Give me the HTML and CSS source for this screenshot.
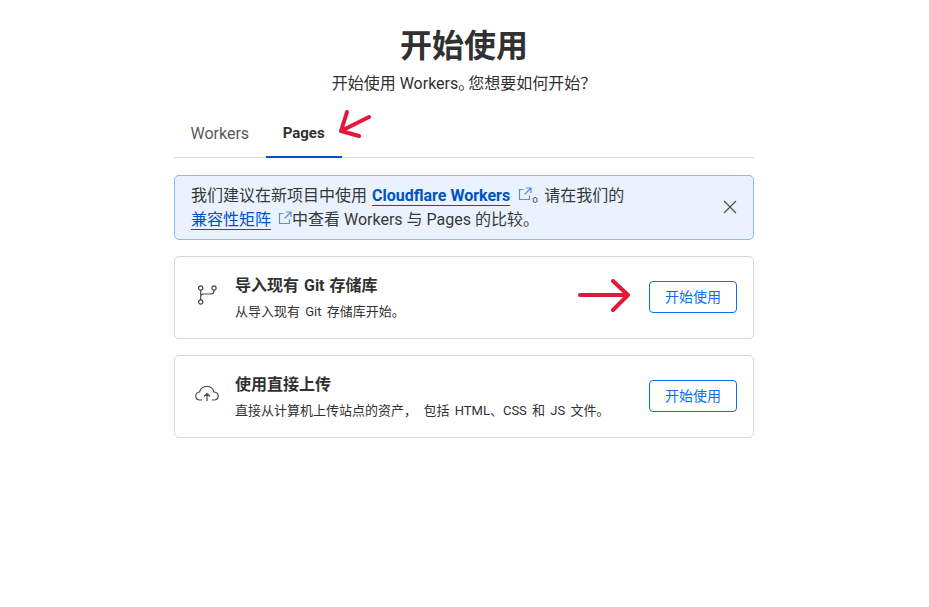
FILE: index.html
```html
<!DOCTYPE html>
<html lang="zh-CN">
<head>
    <meta charset="UTF-8">
    <meta name="viewport" content="width=device-width, initial-scale=1.0">
    <title>开始使用</title>
    <link rel="stylesheet" href="styles.css">
</head>
<body>
    <div class="page">
        <h1 class="title">开始使用</h1>
        <p class="subtitle">开始使用 Workers<span class="tight-stop">。</span>您想要如何开始？</p>

        <!-- Tabs -->
        <div class="tabs">
            <div class="tab">Workers</div>
            <div class="tab tab-active">Pages</div>
        </div>

        <!-- Notice -->
        <div class="notice">
            <p class="notice-text">我们建议在新项目中使用 <a class="link link-strong" href="#">Cloudflare Workers</a>
                <svg class="ext-icon" viewBox="0 0 14 14"><path d="M5.5 2.5H1.5V12.5H11.5V8.5M8 1H13V6M13 1L6.5 7.5"/></svg><span class="tight-stop-small">。</span>请在我们的<br>
                <a class="link" href="#">兼容性矩阵</a>
                <svg class="ext-icon" viewBox="0 0 14 14"><path d="M5.5 2.5H1.5V12.5H11.5V8.5M8 1H13V6M13 1L6.5 7.5"/></svg>中查看 Workers 与 Pages 的比较。</p>
            <svg class="close-icon" viewBox="0 0 14 14"><path d="M1 1L13 13M13 1L1 13"/></svg>
        </div>

        <!-- Options -->
        <div class="card">
            <svg class="card-icon" viewBox="0 0 24 24"><circle cx="5.7" cy="2" r="2.1"/><circle cx="5.7" cy="16" r="2.1"/><circle cx="19" cy="2" r="2.1"/><path d="M5.7 4.1V13.900M19 4.100V5Q19 8 16 8H8Q5.700 8 5.700 10.500"/></svg>
            <div class="card-body">
                <div class="card-title">导入现有 Git 存储库</div>
                <div class="card-desc">从导入现有 Git 存储库开始。</div>
            </div>
            <button class="start-btn">开始使用</button>
        </div>

        <div class="card">
            <svg class="card-icon" viewBox="0 0 24 24"><path d="M7 15H5Q0.800 15 0.800 11Q0.800 7.500 4.500 7Q6 1.500 12 1.500Q17.500 1.500 19 7Q23.200 7.500 23.200 11Q23.200 15 19 15H17M12 16V9M9 11.500L12 8.500L15 11.500"/></svg>
            <div class="card-body">
                <div class="card-title">使用直接上传</div>
                <div class="card-desc">直接从计算机上传站点的资产，　包括 HTML、CSS 和 JS 文件。</div>
            </div>
            <button class="start-btn">开始使用</button>
        </div>
    </div>

    <!-- Hand drawn arrows on top of the screenshot -->
    <svg class="marker marker-pages" viewBox="0 0 34 30"><path d="M31 7L3 21M9 2L3 21L21 26"/></svg>
    <svg class="marker marker-start" viewBox="0 0 56 34"><path d="M2 16H50M35 2L50 16L35 31"/></svg>
</body>
</html>
```

FILE: styles.css
```css
body {
    font-family: Roboto, "Noto Sans CJK SC", sans-serif;
    background-color: #fff;
    color: #313131;
    margin: 0;
    padding-right: 1px;
}
.page {
    width: 580px;
    margin: 0 auto;
    padding-top: 24px;
}
.title {
    font-size: 32px;
    line-height: 44px;
    font-weight: 700;
    text-align: center;
    margin: 0;
}
.subtitle {
    font-size: 16px;
    line-height: 24px;
    text-align: center;
    margin: 4px 0 0;
}
.tight-stop {
    letter-spacing: -6px;
}
.tight-stop-small {
    letter-spacing: -4px;
}
.tabs {
    display: flex;
    height: 47px;
    margin-top: 14px;
    border-bottom: 1px solid #d9d9d9;
}
.tab {
    padding: 0 16.5px;
    font-size: 16px;
    line-height: 47px;
    color: #595959;
}
.tab-active {
    color: #313131;
    font-size: 15px;
    font-weight: 700;
    height: 46px;
    padding: 0 17px;
    border-bottom: 2px solid #0051c3;
}
.notice {
    display: flex;
    align-items: center;
    justify-content: space-between;
    height: 65px;
    box-sizing: border-box;
    margin-top: 17px;
    padding: 0 16px;
    background-color: #eaf2fe;
    border: 1px solid #8fb8f6;
    border-radius: 5px;
}
.notice-text {
    font-size: 16px;
    line-height: 24px;
    margin: 0;
    color: #36393a;
}
.link {
    color: #0051c3;
    text-decoration: none;
    border-bottom: 1px solid #0051c3;
}
.link-strong {
    font-weight: 700;
    margin-left: 1px;
}
.ext-icon {
    width: 14px;
    height: 14px;
    margin-left: 3px;
    fill: none;
    stroke: #5a8fd8;
    stroke-width: 1.2;
}
.link-strong + .ext-icon {
    margin-left: 4px;
}
.close-icon {
    width: 14px;
    height: 14px;
    margin-bottom: 1px;
    fill: none;
    stroke: #4a4a4a;
    stroke-width: 1.1;
}
.card {
    display: flex;
    align-items: center;
    height: 83px;
    box-sizing: border-box;
    margin-top: 16px;
    padding: 0 16px 0 20px;
    border: 1px solid #d9d9d9;
    border-radius: 5px;
}
.card-icon {
    width: 24px;
    height: 24px;
    flex-shrink: 0;
    overflow: visible;
    fill: none;
    stroke: #4a4a4a;
    stroke-width: 1.2;
}
.card-body {
    flex: 1;
    margin-left: 16px;
}
.card-title {
    font-size: 16px;
    line-height: 22px;
    font-weight: 700;
    word-spacing: 1px;
}
.card-desc {
    font-size: 13px;
    line-height: 18px;
    margin-top: 6px;
    word-spacing: 2px;
}
.start-btn {
    width: 88px;
    height: 32px;
    padding: 0 0 2px;
    margin-bottom: 1px;
    font-family: inherit;
    font-size: 14px;
    color: #0a6ff2;
    background-color: #fff;
    border: 1px solid #0a6ff2;
    border-radius: 4px;
}
.marker {
    position: absolute;
    fill: none;
    stroke: #e5173a;
    stroke-width: 4;
    stroke-linecap: round;
    stroke-linejoin: round;
}
.marker-pages {
    left: 338px;
    top: 110px;
    width: 34px;
    height: 30px;
}
.marker-start {
    left: 578px;
    top: 279px;
    width: 56px;
    height: 34px;
}
```
